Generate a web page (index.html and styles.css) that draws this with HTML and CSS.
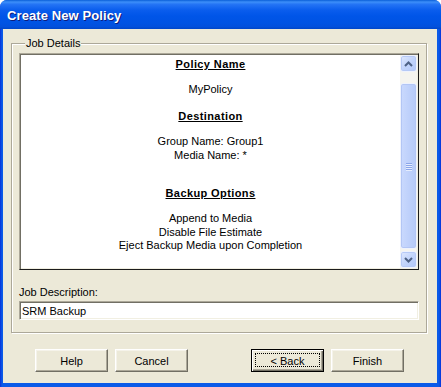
FILE: index.html
```html
<!DOCTYPE html>
<html lang="en">
<head>
  <meta charset="UTF-8" />
  <title>Create New Policy</title>
  <link rel="stylesheet" href="styles.css">
</head>
<body>

  <div class="window">
    <div class="title-bar">Create New Policy</div>

    <div class="client">
      <fieldset class="group">
        <legend>Job Details</legend>

        <!-- summary of the policy -->
        <div class="details">
          <div class="details-text">
            <div class="section">
              <div class="heading">Policy Name</div>
              <div>MyPolicy</div>
            </div>
            <div class="section">
              <div class="heading">Destination</div>
              <div>Group Name: Group1</div>
              <div>Media Name: *</div>
            </div>
            <div class="section section-wide">
              <div class="heading">Backup Options</div>
              <div>Append to Media</div>
              <div>Disable File Estimate</div>
              <div>Eject Backup Media upon Completion</div>
            </div>
          </div>

          <div class="scrollbar">
            <div class="sb-btn">
              <svg width="9" height="6" viewBox="0 0 9 6"><polyline points="1,5 4.5,1.5 8,5" fill="none" stroke="#4d6185" stroke-width="2"/></svg>
            </div>
            <div class="sb-thumb">
              <div class="grip"><span></span><span></span><span></span><span></span></div>
            </div>
            <div class="sb-btn">
              <svg width="9" height="6" viewBox="0 0 9 6"><polyline points="1,1 4.5,4.5 8,1" fill="none" stroke="#4d6185" stroke-width="2"/></svg>
            </div>
          </div>
        </div>

        <label class="field-label" for="desc">Job Description:</label>
        <input class="field" id="desc" type="text" value="SRM Backup">
      </fieldset>

      <div class="buttons">
        <button class="btn">Help</button>
        <button class="btn">Cancel</button>
        <button class="btn btn-default btn-back">&lt; Back</button>
        <button class="btn">Finish</button>
      </div>
    </div>
  </div>

</body>
</html>
```

FILE: styles.css
```css
body {
  margin: 0;
  background-color: #fff;
  font-family: "Liberation Sans", Arial, sans-serif;
  font-size: 11px;
  color: #000;
}

.window {
  width: 441px;
  height: 387px;
  box-sizing: border-box;
  border-radius: 7px 7px 0 0;
  background: linear-gradient(to right, #0831d9, #0a5ae8 2px, #0a5ae8 calc(100% - 2px), #0831d9);
  overflow: hidden;
  display: flex;
  flex-direction: column;
}

.title-bar {
  height: 29px;
  flex: none;
  box-sizing: border-box;
  padding: 8px 0 0 7px;
  background: linear-gradient(to bottom, #0a5fd8 0%, #3d8ff9 7%, #2474f5 15%, #0a5ded 35%, #0055e8 55%, #0053e3 80%, #0250dc 92%, #0046c8 100%);
  color: #fff;
  font-weight: bold;
  font-size: 13px;
  line-height: 16px;
  letter-spacing: 0.1px;
  text-shadow: 1px 1px #0f1c7a;
}

.client {
  flex: none;
  height: 354px;
  margin: 0 4px 0 3px;
  background-color: #ece9d8;
  display: flex;
  flex-direction: column;
}

.group {
  margin: 8px 10px 0 8px;
  padding: 3px 7px 12px 7px;
  border: 1px solid #aca899;
  box-shadow: inset 1px 1px #fff, 1px 1px #fff;
  display: flex;
  flex-direction: column;
  min-width: 0;
}

.group legend {
  margin-left: 6px;
  padding: 0 1px;
  line-height: 13px;
  background-color: #ece9d8;
}

.details {
  height: 217px;
  box-sizing: border-box;
  display: flex;
  background-color: #fff;
  border: 1px solid;
  border-color: #aca899 #1c1c1c #1c1c1c #aca899;
  box-shadow: inset 1px 1px #716f64, inset -1px -1px #f1efe2;
  padding: 1px;
}

.details-text {
  flex: 1;
  text-align: center;
  padding-top: 2px;
  line-height: 14px;
}

.section + .section {
  margin-top: 13px;
}

.section.section-wide {
  margin-top: 24px;
}

.heading {
  font-weight: bold;
  text-decoration: underline;
  letter-spacing: 0.4px;
  margin-bottom: 11px;
}

.section-wide div:last-child {
  margin-top: -1px;
}

.scrollbar {
  width: 17px;
  flex: none;
  display: flex;
  flex-direction: column;
  background-color: #f5f4ef;
}

.sb-btn {
  height: 17px;
  flex: none;
  box-sizing: border-box;
  border: 1px solid #eef2fd;
  border-radius: 3px;
  box-shadow: inset 0 0 0 1px #b6c9f6;
  background: linear-gradient(135deg, #e0e9fe, #c2d4fb 50%, #b2c7f8);
  display: flex;
  align-items: center;
  justify-content: center;
}

.sb-thumb {
  flex: 1;
  margin: 11px 0 2px;
  box-sizing: border-box;
  border: 1px solid #eef2fd;
  border-radius: 3px;
  box-shadow: inset 0 0 0 1px #b3c6f5;
  background: linear-gradient(to right, #cad9fd, #bfd1fb 50%, #b6caf9);
  display: flex;
  align-items: center;
  justify-content: center;
}

.grip {
  display: flex;
  flex-direction: column;
  gap: 1px;
}

.grip span {
  display: block;
  width: 6px;
  height: 1px;
  background-color: #8ba6ea;
  box-shadow: 0 1px #e6edfe;
}

.field-label {
  display: block;
  margin-top: 16px;
  margin-bottom: 2px;
  line-height: 13px;
}

.field {
  height: 19px;
  box-sizing: border-box;
  margin: 0;
  padding: 0 2px;
  font-family: "Liberation Sans", Arial, sans-serif;
  font-size: 11px;
  color: #000;
  border: 1px solid;
  border-color: #aca899 #fff #fff #aca899;
  box-shadow: inset 1px 1px #716f64, inset -1px -1px #f1efe2;
  outline: none;
}

.buttons {
  display: flex;
  gap: 7px;
  margin: 16px 0 0 32px;
}

.btn {
  width: 73px;
  height: 23px;
  box-sizing: border-box;
  padding: 0;
  background-color: #ece9d8;
  border: 1px solid;
  border-color: #fff #716f64 #716f64 #fff;
  box-shadow: inset -1px -1px #aca899, inset 1px 1px #f5f3ea;
  font-family: "Liberation Sans", Arial, sans-serif;
  font-size: 11px;
  color: #000;
}

.btn-back {
  margin-left: 56px;
  position: relative;
}

.btn-default {
  border-color: #000;
  box-shadow: inset 1px 1px #fff, inset -1px -1px #716f64, inset -2px -2px #aca899;
}

.btn-back::after {
  content: "";
  position: absolute;
  inset: 3px 3px 4px 3px;
  border: 1px dotted #000;
}
```
